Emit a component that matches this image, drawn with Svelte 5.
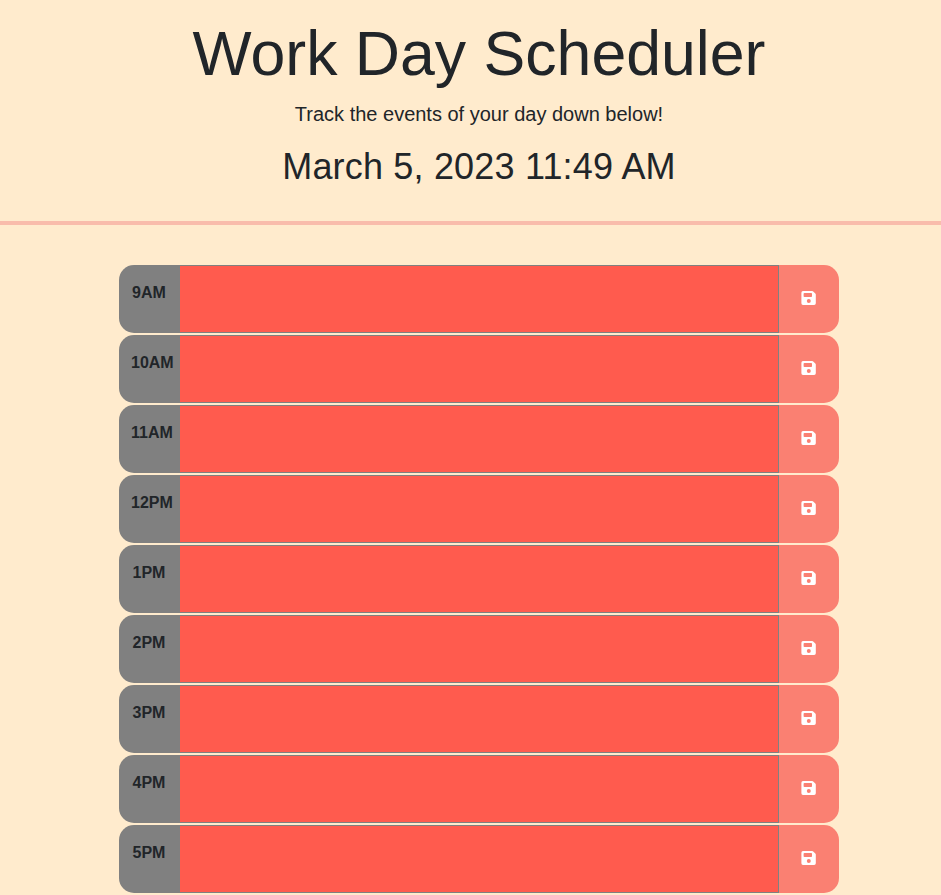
<script>
  const hours = ['9AM', '10AM', '11AM', '12PM', '1PM', '2PM', '3PM', '4PM', '5PM'];
</script>

<div class="page">
  <header>
    <h1>Work Day Scheduler</h1>
    <p class="lead">Track the events of your day down below!</p>
    <p class="date">March 5, 2023 11:49 AM</p>
  </header>
  <main>
    {#each hours as hour}
      <div class="row">
        <div class="hour"><span>{hour}</span></div>
        <textarea aria-label={hour}></textarea>
        <button aria-label="Save">
          <svg width="15" height="14" viewBox="0 0 15 14"><path fill="currentColor" fill-rule="evenodd" d="M2 0H11.2Q11.8 0 12.2 .4L14.3 2.5Q14.8 3 14.8 3.6V12.3Q14.8 14 13.1 14H2Q.4 14 .4 12.3V1.7Q.4 0 2 0ZM3.4 2Q2.6 2 2.6 2.8V5.2Q2.6 6 3.4 6H10.2Q11 6 11 5.2V2.8Q11 2 10.2 2ZM7.8 8.1a2 2 0 1 0 0 4a2 2 0 1 0 0-4Z"/></svg>
        </button>
      </div>
    {/each}
  </main>
</div>

<style>
  :global(body) { margin: 0; background: #ffebcd; overflow: hidden; }
  .page { height: 895px; overflow: hidden; background: #ffebcd; color: #212529; font-family: "Liberation Sans", Arial, sans-serif; }
  header { box-sizing: border-box; height: 225px; padding: 15px 0 0 17px; text-align: center; border-bottom: 4px solid #f9bcab; }
  h1 { margin: 0; font-size: 62.6px; font-weight: 400; line-height: 76px; }
  p { margin: 0; }
  .lead { margin-top: 8px; font-size: 20px; line-height: 30px; }
  .date { margin-top: 16px; font-size: 36px; line-height: 43px; letter-spacing: 0.18px; }
  main { width: 720px; margin: 40px 0 0 119px; }
  .row { display: flex; height: 68px; margin-bottom: 2px; }
  .hour { box-sizing: border-box; width: 61px; padding: 16px 0 0 12px; background: #808080; border-radius: 15px 0 0 15px; font-size: 16px; font-weight: 700; line-height: 24px; }
  .hour span { display: inline-block; min-width: 36px; text-align: center; }
  textarea { box-sizing: border-box; width: 599px; height: 68px; margin: 0; padding: 0; resize: none; outline: none; background: #ff5b4e; border: 0 solid #808080; border-width: 1px 1px 1px 0; border-radius: 0; }
  button { width: 60px; padding: 0 1px 2px 0; display: flex; align-items: center; justify-content: center; background: #fa8072; border: 0; border-radius: 0 15px 15px 0; color: #fff; }
  svg { display: block; }
</style>
